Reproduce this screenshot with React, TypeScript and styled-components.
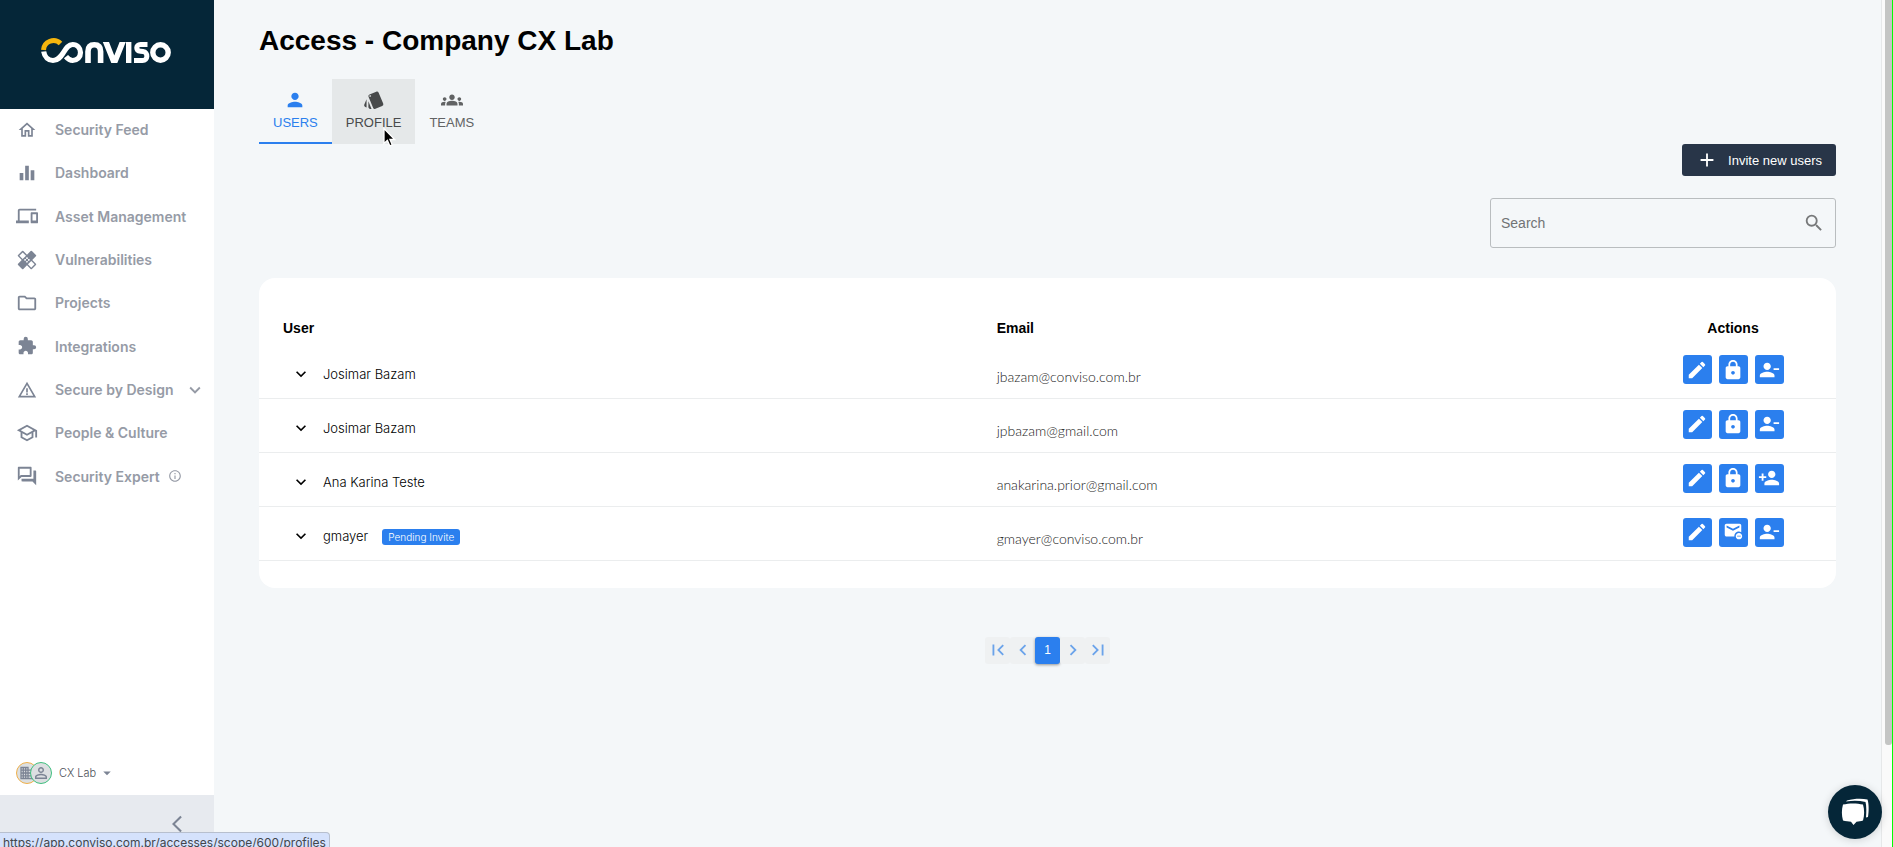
import React from 'react';
import styled, { createGlobalStyle } from 'styled-components';
import type { IconType } from 'react-icons';
import {
  MdAdd, MdArrowBackIosNew, MdArrowDropDown, MdChevronLeft, MdChevronRight, MdEdit,
  MdEqualizer, MdExpandMore, MdExtension, MdFirstPage, MdGroups, MdHealing, MdInfoOutline, MdLastPage,
  MdLock, MdOutlineDevices, MdOutlineFolder, MdOutlineForum, MdOutlineHome, MdOutlineSchool, MdPerson,
  MdPersonAdd, MdPersonOutline, MdPersonRemove, MdSearch, MdStyle, MdUnsubscribe, MdWarningAmber,
} from 'react-icons/md';

const navy = '#052638';
const blue = '#2b7fee';
const display = `Inter, "Open Sans", sans-serif`;
const sans = `"Liberation Sans", Arial, sans-serif`;

const GlobalStyle = createGlobalStyle`
  *, *::before, *::after { box-sizing: border-box; }
  html, body { margin: 0; height: 100%; }
  #root { height: 100%; }
  body { background: #f4f7f9; font-family: ${sans}; font-size: 14px; color: #000; overflow: hidden; }
  button, input { font: inherit; color: inherit; }
  button { border: 0; padding: 0; background: none; cursor: pointer; }
  a { color: inherit; text-decoration: none; }
  svg { display: block; flex: none; }
`;

const Shell = styled.div`
  display: grid;
  grid-template-columns: 214px minmax(0, 1fr) 12px;
  min-height: 100vh;
`;

const Sidebar = styled.aside`
  display: flex;
  flex-direction: column;
  background: #fff;
  font-family: ${display};
`;

const Brand = styled.a`
  display: flex;
  align-items: center;
  justify-content: center;
  height: 109px;
  padding: 0 2px 8px 0;
  background: ${navy};
`;

const Nav = styled.ul`
  display: grid;
  grid-auto-rows: 1fr;
  height: 390px;
  margin: 0;
  padding: 0;
  list-style: none;
`;

const NavLink = styled.a`
  display: flex;
  align-items: center;
  height: 100%;
  padding: 0 8px 2px 16px;
  color: #969ba6;
  font-size: 14px;
  font-weight: 600;
  white-space: nowrap;
`;

const NavIcon = styled.span`
  display: flex;
  justify-content: center;
  width: 22px;
  margin-right: 17px;
  color: #7c8494;
`;

const NavExtra = styled.span<{ $end?: boolean }>`
  display: flex;
  margin-left: ${(p) => (p.$end ? 'auto' : '8px')};
`;

const Account = styled.button`
  display: flex;
  align-items: center;
  height: 40px;
  margin-top: auto;
  padding-left: 16px;
  color: #4c5057;
  font-size: 11px;
  font-weight: 300;

  > svg { margin-left: 2px; color: #7c8494; }
`;

const Avatar = styled.span<{ $ring: string }>`
  display: flex;
  align-items: center;
  justify-content: center;
  width: 22px;
  height: 22px;
  border: 1px solid ${(p) => p.$ring};
  border-radius: 50%;
  background: #dcdfe1;
  color: #7c8494;

  & + & { margin-left: -8px; margin-right: 7px; }
`;

const Collapse = styled.button`
  display: flex;
  justify-content: flex-end;
  height: 52px;
  margin-top: 2px;
  padding: 19px 27px 0 0;
  background: #e7eaef;
  color: #7c8494;
`;

const Main = styled.main`
  padding: 25px 45px 0;
`;

const Title = styled.h1`
  margin: 0 0 22px;
  font-size: 28px;
  line-height: 32px;
  font-weight: 700;
`;

const Tabs = styled.nav`
  display: flex;
  height: 65px;
`;

const Tab = styled.a<{ $state?: 'active' | 'hover' }>`
  display: flex;
  flex-direction: column;
  align-items: center;
  gap: 4px;
  padding: 10px 14px 0;
  border-bottom: 2px solid ${(p) => (p.$state === 'active' ? blue : 'transparent')};
  background: ${(p) => (p.$state === 'hover' ? '#e5e8e9' : 'transparent')};
  color: ${(p) => (p.$state === 'active' ? blue : p.$state === 'hover' ? '#484a4b' : '#616364')};
  font-size: 13px;
  line-height: 15px;
`;

const Tools = styled.div`
  display: flex;
  flex-direction: column;
  align-items: flex-end;
  gap: 22px;
`;

const InviteButton = styled.button`
  display: flex;
  align-items: center;
  gap: 10px;
  height: 32px;
  padding: 0 14px;
  border-radius: 3px;
  background: #283548;
  color: #fff;
  font-size: 13px;
`;

const SearchBox = styled.label`
  display: flex;
  align-items: center;
  width: 346px;
  height: 50px;
  padding: 0 10px;
  border: 1px solid #b9bdbf;
  border-radius: 3px;
  color: #77797a;

  input {
    flex: 1;
    min-width: 0;
    padding: 0;
    border: 0;
    outline: 0;
    background: none;
  }
  input::placeholder { color: #717375; opacity: 1; }
`;

const Card = styled.section`
  margin-top: 30px;
  padding: 33px 0 27px;
  border-radius: 16px;
  background: #fff;
`;

const Table = styled.table`
  width: 100%;
  table-layout: fixed;
  border-collapse: collapse;

  col:nth-child(1) { width: 45%; }
  col:nth-child(3) { width: 206px; }
  th { height: 33px; padding: 0 24px; text-align: left; }
  th:nth-child(2) { padding-left: 28px; }
  th:last-child { padding: 0; text-align: center; }
`;

const Row = styled.tr`
  height: 54px;
  border-bottom: 1px solid #ebedee;
  font-family: ${display};
  font-size: 13px;
  font-weight: 300;
`;

const UserCell = styled.td`
  padding: 6px 24px 0 32px;

  > div { display: flex; align-items: center; }
  button { margin-right: 12px; }
`;

const EmailCell = styled.td`
  padding: 11px 24px 0 28px;
  color: #222;
  font-family: Lato, sans-serif;
  font-size: 14px;
`;

const ActionCell = styled.td`
  padding: 0 0 2px;

  > div { display: flex; justify-content: center; gap: 7px; }
`;

const ActionButton = styled.button`
  display: flex;
  align-items: center;
  justify-content: center;
  width: 29px;
  height: 29px;
  border-radius: 3px;
  background: ${blue};
  color: #fff;
`;

const Badge = styled.span`
  margin: 2px 0 0 14px;
  padding: 0 6px;
  border-radius: 3px;
  background: ${blue};
  color: #fff;
  font-size: 10px;
  line-height: 16px;
`;

const Pager = styled.nav`
  display: flex;
  justify-content: center;
  margin-top: 49px;
`;

const PageButton = styled.button<{ $current?: boolean }>`
  display: flex;
  align-items: center;
  justify-content: center;
  width: 25px;
  height: 27px;
  border-radius: 3px;
  background: ${(p) => (p.$current ? blue : '#eff1f2')};
  color: ${(p) => (p.$current ? '#fff' : '#6ba3ea')};
  box-shadow: ${(p) => (p.$current ? '0 1px 3px rgba(0, 0, 0, 0.4)' : 'none')};
  font-size: 12px;
`;

const ScrollTrack = styled.div`
  border-left: 1px solid #e6e8e9;
  border-right: 1px solid #00ff00;
  padding-left: 3px;
  background: #fafafa;
`;

const ScrollThumb = styled.div`
  height: 88vh;
  border-radius: 0 0 3px 3px;
  background: #c4c5c4;
`;

const ChatButton = styled.button`
  position: fixed;
  right: 11px;
  bottom: 8px;
  display: flex;
  align-items: center;
  justify-content: center;
  width: 54px;
  height: 54px;
  border-radius: 50%;
  background: ${navy};
  box-shadow: 0 1px 8px rgba(0, 0, 0, 0.16);
`;

const LinkStatus = styled.div`
  position: fixed;
  left: 0;
  bottom: -5px;
  height: 20px;
  padding: 0 3px;
  border: 1px solid #b7bfce;
  border-left: 0;
  border-radius: 0 4px 0 0;
  background: #d5e2fc;
  color: #42464c;
  font-family: Inter, sans-serif;
  font-size: 12px;
  line-height: 20px;
`;

const Pointer = styled.svg`
  position: fixed;
  left: 382px;
  top: 127px;
`;

function Logo() {
  return (
    <svg width="130" height="27" viewBox="0 0 130 27" fill="none" role="img" aria-label="Conviso">
      <path
        d="M2.700 14.500c.800 5.500 4.800 9 9.300 9 5 0 7.500-3.500 10-7.300S27 7.500 31.700 7.500c4.400 0 7.800 3.400 7.800 8s-3.400 8-7.800 8c-3.200 0-5-1.600-6.700-3.800"
        stroke="#fff" strokeWidth="5.200"
      />
      <path d="M2.500 13A10 10 0 0 1 19.500 6.500" stroke="#f5b50d" strokeWidth="5" />
      <path d="M47 26V14.500c0-4.500 2.400-6.700 6.300-6.700s6.300 2.200 6.300 6.700V26" stroke="#fff" strokeWidth="5.600" />
      <path d="M61.800 5h6.200l5.300 13.500L78.600 5h6.200L76.300 26h-6z" fill="#fff" />
      <path d="M87.700 5v21" stroke="#fff" strokeWidth="5.400" />
      <path d="M106.500 7.500H99.500c-5 0-5 6.300 0 6.800l2.500.300c5.500.600 5 8.900-.500 8.900H93" stroke="#fff" strokeWidth="5" />
      <circle cx="119.500" cy="15.500" r="7.700" stroke="#fff" strokeWidth="5.400" />
    </svg>
  );
}

function CompanyIcon() {
  return (
    <svg width="16" height="14" viewBox="0 0 16 14" fill="none" stroke="currentColor" strokeWidth="1.300">
      <path d="M2 1.500h7v11H2zM4.300 1.500v11M6.700 1.500v11M2 4.200h7M2 7h13M2 9.800h13M9 4.200h6v8.300H2" />
    </svg>
  );
}

type NavItem = { label: string; icon: IconType; size?: number; extra?: React.ReactNode; extraAtEnd?: boolean };

const navItems: NavItem[] = [
  { label: 'Security Feed', icon: MdOutlineHome, size: 20 },
  { label: 'Dashboard', icon: MdEqualizer },
  { label: 'Asset Management', icon: MdOutlineDevices },
  { label: 'Vulnerabilities', icon: MdHealing },
  { label: 'Projects', icon: MdOutlineFolder },
  { label: 'Integrations', icon: MdExtension, size: 20 },
  { label: 'Secure by Design', icon: MdWarningAmber, size: 20, extra: <MdExpandMore size={22} />, extraAtEnd: true },
  { label: 'People & Culture', icon: MdOutlineSchool },
  { label: 'Security Expert', icon: MdOutlineForum, extra: <MdInfoOutline size={14} /> },
];

type Action = { label: string; icon: IconType };
type User = { name: string; email: string; pending?: boolean; actions: Action[] };

const edit: Action = { label: 'Edit', icon: MdEdit };
const lock: Action = { label: 'Lock', icon: MdLock };
const remove: Action = { label: 'Remove', icon: MdPersonRemove };
const add: Action = { label: 'Add', icon: MdPersonAdd };
const cancel: Action = { label: 'Cancel invite', icon: MdUnsubscribe };

const users: User[] = [
  { name: 'Josimar Bazam', email: 'jbazam@conviso.com.br', actions: [edit, lock, remove] },
  { name: 'Josimar Bazam', email: 'jpbazam@gmail.com', actions: [edit, lock, remove] },
  { name: 'Ana Karina Teste', email: 'anakarina.prior@gmail.com', actions: [edit, lock, add] },
  { name: 'gmayer', email: 'gmayer@conviso.com.br', pending: true, actions: [edit, cancel, remove] },
];

export default function App() {
  return (
    <>
      <GlobalStyle />
      <Shell>
        <Sidebar>
          <Brand href="#"><Logo /></Brand>
          <Nav>
            {navItems.map(({ label, icon: Icon, size = 22, extra, extraAtEnd }) => (
              <li key={label}>
                <NavLink href="#">
                  <NavIcon><Icon size={size} /></NavIcon>
                  {label}
                  {extra && <NavExtra $end={extraAtEnd}>{extra}</NavExtra>}
                </NavLink>
              </li>
            ))}
          </Nav>
          <Account>
            <Avatar $ring="#efb04a"><CompanyIcon /></Avatar>
            <Avatar $ring="#3fbf7f"><MdPersonOutline size={18} /></Avatar>
            CX Lab
            <MdArrowDropDown size={18} />
          </Account>
          <Collapse aria-label="Collapse menu"><MdArrowBackIosNew size={20} /></Collapse>
        </Sidebar>

        <Main>
          <Title>Access - Company CX Lab</Title>
          <Tabs>
            <Tab href="#users" $state="active"><MdPerson size={22} />USERS</Tab>
            <Tab href="#profile" $state="hover"><MdStyle size={22} />PROFILE</Tab>
            <Tab href="#teams"><MdGroups size={22} />TEAMS</Tab>
          </Tabs>
          <Tools>
            <InviteButton><MdAdd size={22} />Invite new users</InviteButton>
            <SearchBox>
              <input type="text" placeholder="Search" aria-label="Search" />
              <MdSearch size={22} />
            </SearchBox>
          </Tools>

          <Card>
            <Table>
              <colgroup><col /><col /><col /></colgroup>
              <thead>
                <tr><th>User</th><th>Email</th><th>Actions</th></tr>
              </thead>
              <tbody>
                {users.map((user) => (
                  <Row key={user.email}>
                    <UserCell>
                      <div>
                        <button aria-label="Expand"><MdExpandMore size={20} /></button>
                        {user.name}
                        {user.pending && <Badge>Pending Invite</Badge>}
                      </div>
                    </UserCell>
                    <EmailCell>{user.email}</EmailCell>
                    <ActionCell>
                      <div>
                        {user.actions.map(({ label, icon: Icon }) => (
                          <ActionButton key={label} aria-label={label}><Icon size={22} /></ActionButton>
                        ))}
                      </div>
                    </ActionCell>
                  </Row>
                ))}
              </tbody>
            </Table>
          </Card>

          <Pager aria-label="Pages">
            <PageButton aria-label="First page"><MdFirstPage size={22} /></PageButton>
            <PageButton aria-label="Previous page"><MdChevronLeft size={22} /></PageButton>
            <PageButton $current>1</PageButton>
            <PageButton aria-label="Next page"><MdChevronRight size={22} /></PageButton>
            <PageButton aria-label="Last page"><MdLastPage size={22} /></PageButton>
          </Pager>
        </Main>

        <ScrollTrack><ScrollThumb /></ScrollTrack>
      </Shell>

      <ChatButton aria-label="Open chat">
        <svg width="30" height="30" viewBox="0 0 30 30">
          <path d="M7 3.500C14 1.500 22 1.500 27.500 2.500 29 7 29 14 28 20l-2 .500C26.500 15 26.500 9 25.500 5 19 3.500 13 3.500 6 4.500z" fill="#fff" />
          <path d="M3 7.500c6-1.500 14-1.500 20 0 1.500 5 1.500 11 0 16-2 .700-4.500 1-6.500 1.200L13.500 28l-2.500-3.300c-2.500-.200-5.500-.500-8-1.200-1.500-5-1.500-11 0-16z" fill="#fff" />
        </svg>
      </ChatButton>
      <LinkStatus>https://app.conviso.com.br/accesses/scope/600/profiles</LinkStatus>
      <Pointer width="15" height="21" viewBox="0 0 13 19" aria-hidden="true">
        <path d="M1.500 1.500v13.500l3.100-2.900 2.200 5 2.200-1-2.100-4.800h4.300z" fill="#000" stroke="#fff" strokeWidth="1.200" />
      </Pointer>
    </>
  );
}
